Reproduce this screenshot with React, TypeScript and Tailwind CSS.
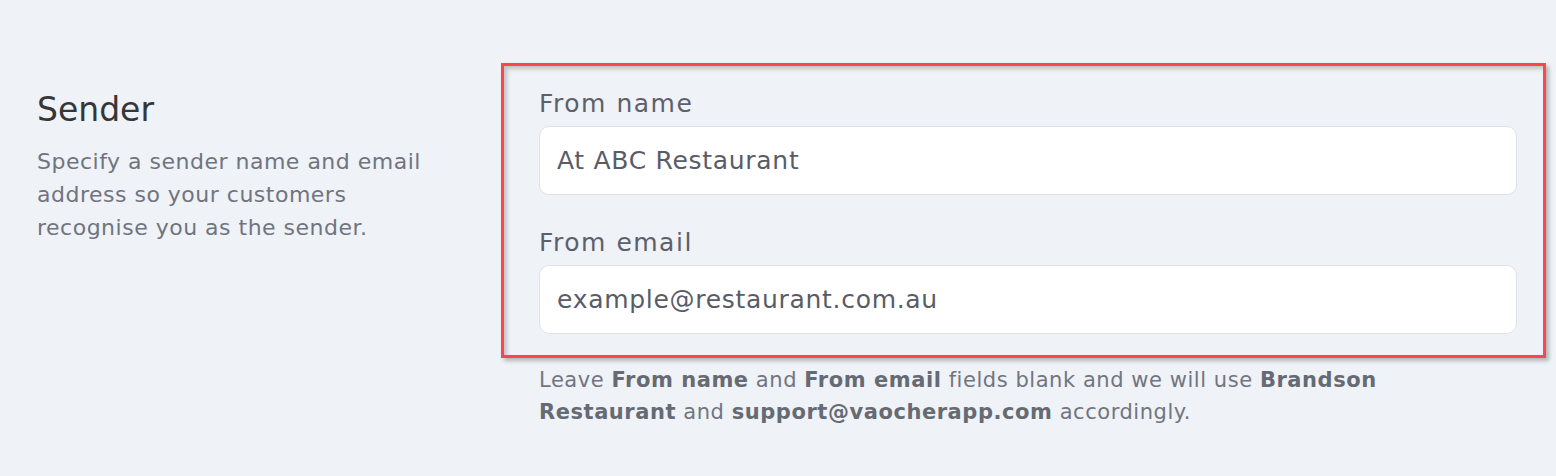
import React from 'react';

// Карточка настроек отправителя: слева заголовок с пояснением, справа поля формы.
// Красная рамка с тенью — аннотация со скриншота, рисуем её обёрткой вокруг полей.
function Field({ label, value, className = '' }: { label: string; value: string; className?: string }) {
  return (
    <div className={className}>
      <label className="block text-[25px] leading-[32px] tracking-[1.5px] text-[#5d606b]">{label}</label>
      <input
        readOnly
        defaultValue={value}
        className="mt-[6px] block h-[69px] w-full rounded-[10px] border-[1.5px] border-[#dfe2e8] bg-white px-[17px] text-[25px] tracking-[0.7px] text-[#595c67] outline-none"
      />
    </div>
  );
}

export default function App() {
  return (
    <div className="flex min-h-[476px] bg-[#eff2f7] pl-[37px] pr-[10px] pt-[63px] font-['DejaVu_Sans',sans-serif]">
      <div className="w-[464px] shrink-0 pt-[27px]">
        <h2 className="text-[33px] leading-[40px] text-[#363636]">Sender</h2>
        <p className="mt-[15px] text-[22px] leading-[33px] tracking-[0.5px] text-[#71747f]">
          Specify a sender name and email
          <br />
          address so your customers
          <br />
          recognise you as the sender.
        </p>
      </div>
      <div className="flex-1">
        <div className="border-[3px] border-[#ff4548] pb-[21px] pl-[35px] pr-[26px] pt-[22px] shadow-[3px_3px_4px_rgba(0,0,0,0.25),inset_3px_3px_4px_rgba(0,0,0,0.2)]">
          <Field label="From name" value="At ABC Restaurant" />
          <Field label="From email" value="example@restaurant.com.au" className="mt-[32px]" />
        </div>
        <p className="mt-[6px] pl-[38px] text-[21px] leading-[32px] tracking-[0.55px] text-[#72757f]">
          Leave <b className="font-bold text-[#666a73]">From name</b> and{' '}
          <b className="font-bold text-[#666a73]">From email</b> fields blank and we will use{' '}
          <b className="font-bold text-[#666a73]">Brandson</b>
          <br />
          <b className="font-bold text-[#666a73]">Restaurant</b> and{' '}
          <b className="font-bold text-[#666a73]">support@vaocherapp.com</b> accordingly.
        </p>
      </div>
    </div>
  );
}
